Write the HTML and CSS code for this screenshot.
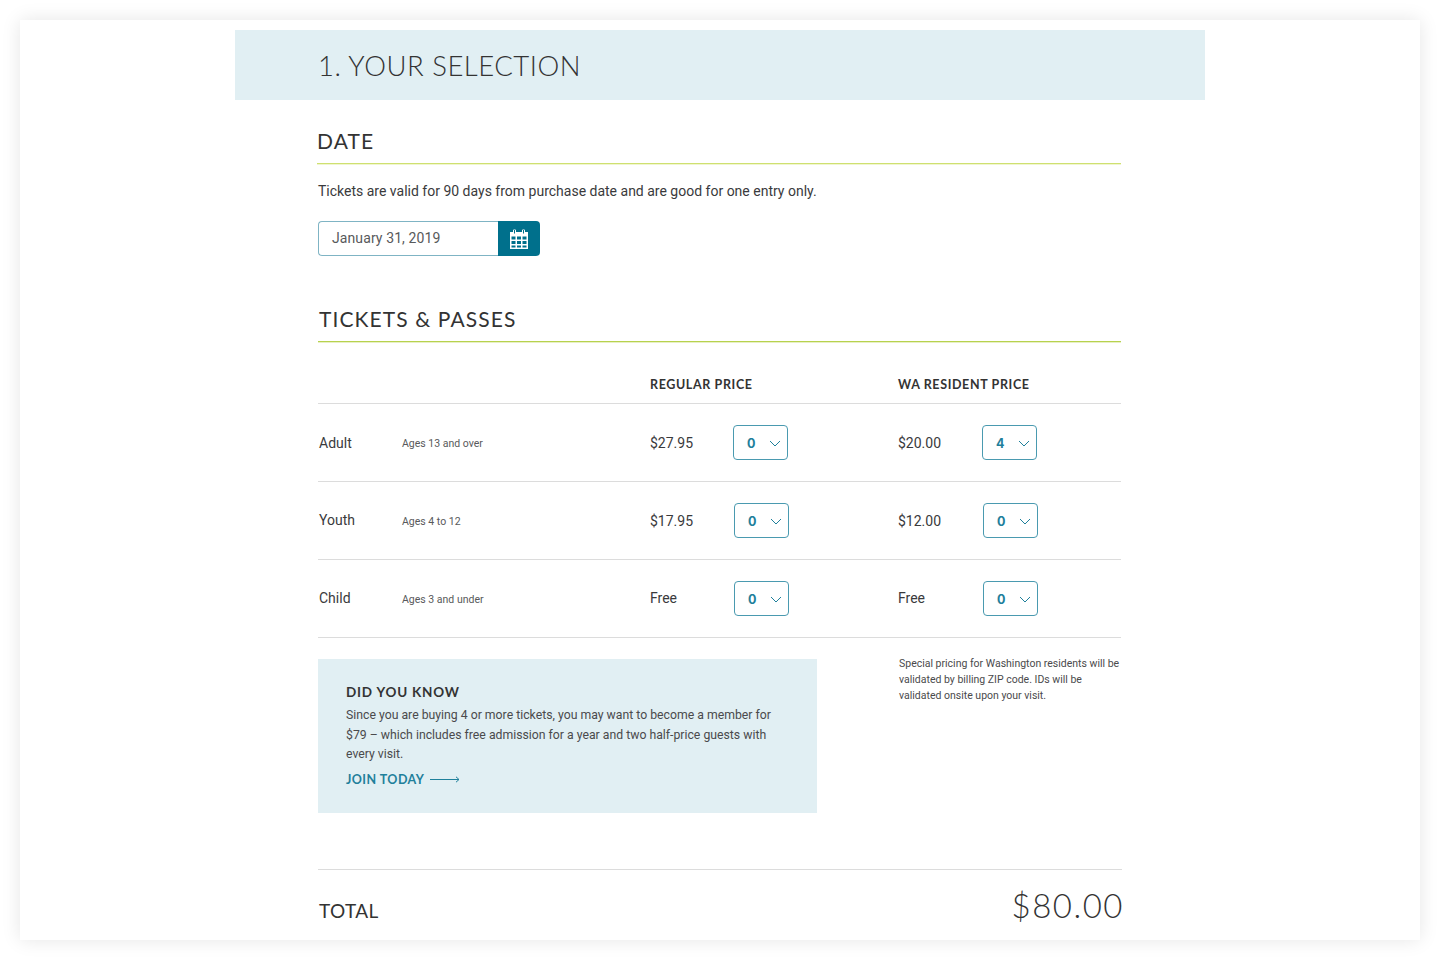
FILE: index.html
```html
<!DOCTYPE html>
<html lang="en">
<head>
<meta charset="utf-8">
<title>Your Selection</title>
<link rel="stylesheet" href="styles.css">
</head>
<body>
<main class="frame">
  <header class="banner"><h1>1. YOUR SELECTION</h1></header>
  <div class="content">
    <section class="date">
      <h2 class="section-title title-date">DATE</h2>
      <p class="lead">Tickets are valid for 90 days from purchase date and are good for one entry only.</p>
      <div class="datepicker">
        <div class="date-value">January 31, 2019</div>
        <div class="date-btn">
          <svg width="20" height="20" viewBox="0 0 20 20" aria-hidden="true">
            <path fill="#fff" d="M1 3h3v-1.5a1 1 0 0 1 1-1h1a1 1 0 0 1 1 1V3h6V1.500a1 1 0 0 1 1-1h1a1 1 0 0 1 1 1V3h3v17H1z"/>
            <path fill="#00708c" d="M5 1h1v3.500H5zM14 1h1v3.500h-1zM2.500 7.500h4v3h-4zM8 7.500h4v3H8zM13.500 7.500h4v3h-4zM2.500 12h4v3h-4zM8 12h4v3H8zM13.500 12h4v3h-4zM2.500 16.500h4v2h-4zM8 16.500h4v2H8zM13.500 16.500h4v2h-4z"/>
          </svg>
        </div>
      </div>
    </section>

    <section class="tickets">
      <h2 class="section-title title-tickets">TICKETS &amp; PASSES</h2>
      <div class="row row-head">
        <span></span><span></span>
        <span class="col-head">REGULAR PRICE</span><span></span>
        <span class="col-head">WA RESIDENT PRICE</span><span></span>
      </div>
      <div class="row row-first">
        <span class="name">Adult</span><span class="ages">Ages 13 and over</span>
        <span class="price">$27.95</span><div class="select"><b>0</b><svg class="chev" width="12" height="7" viewBox="0 0 12 7"><path d="M1 1l5 5 5-5"/></svg></div>
        <span class="price">$20.00</span><div class="select"><b>4</b><svg class="chev" width="12" height="7" viewBox="0 0 12 7"><path d="M1 1l5 5 5-5"/></svg></div>
      </div>
      <div class="row">
        <span class="name">Youth</span><span class="ages">Ages 4 to 12</span>
        <span class="price">$17.95</span><div class="select"><b>0</b><svg class="chev" width="12" height="7" viewBox="0 0 12 7"><path d="M1 1l5 5 5-5"/></svg></div>
        <span class="price">$12.00</span><div class="select"><b>0</b><svg class="chev" width="12" height="7" viewBox="0 0 12 7"><path d="M1 1l5 5 5-5"/></svg></div>
      </div>
      <div class="row">
        <span class="name">Child</span><span class="ages">Ages 3 and under</span>
        <span class="price price-free">Free</span><div class="select"><b>0</b><svg class="chev" width="12" height="7" viewBox="0 0 12 7"><path d="M1 1l5 5 5-5"/></svg></div>
        <span class="price price-free">Free</span><div class="select"><b>0</b><svg class="chev" width="12" height="7" viewBox="0 0 12 7"><path d="M1 1l5 5 5-5"/></svg></div>
      </div>
    </section>

    <section class="info">
      <aside class="callout">
        <h3>DID YOU KNOW</h3>
        <p>Since you are buying 4 or more tickets, you may want to become a member for $79 – which includes free admission for a year and two half-price guests with every visit.</p>
        <a class="join" href="#">JOIN TODAY
          <svg width="30" height="7" viewBox="0 0 30 7"><path d="M0 3.500h29M26 .8l3 2.700-3 2.700"/></svg>
        </a>
      </aside>
      <div class="note-wrap"><p class="note">Special pricing for Washington residents will be validated by billing ZIP code. IDs will be validated onsite upon your visit.</p></div>
    </section>

    <footer class="total">
      <span class="total-label">TOTAL</span>
      <span class="total-value">$80.00</span>
    </footer>
  </div>
</main>
</body>
</html>
```
FILE: styles.css
```css
* { box-sizing: border-box; }
html, body { margin: 0; padding: 0; background: #fff; }
body { height: 960px; padding: 20px; overflow: hidden; font-family: Roboto, "Liberation Sans", sans-serif; color: #3a3a3c; }
h1, h2, h3, p { margin: 0; font-weight: 400; }

.frame { width: 1400px; height: 920px; padding-top: 10px; overflow: hidden; background: #fff; box-shadow: 0 0 18px rgba(0, 0, 0, .1); }

.banner { height: 70px; margin: 0 215px; padding: 2px 0 0 83px; display: flex; align-items: center; background: #e1eff3; }
.banner h1 { font: 300 27.500px/36px Lato, sans-serif; letter-spacing: .5px; color: #333; }

.content { padding: 0 299px 0 298px; }

.section-title { height: 64px; font: 400 21px/26px Lato, sans-serif; letter-spacing: 1.1px; color: #333; }
.title-date { border-bottom: 1px solid #cfe070; box-shadow: 0 1px 0 #f0f6cf; padding-top: 28px; margin-left: -1px; }
.title-tickets { border-bottom: 1px solid #b7d24e; box-shadow: 0 1px 0 #e8f0c4; padding-left: 1px; height: 86px; padding-top: 50px; }

.lead { margin-top: 17px; font-size: 14px; line-height: 20px; color: #3a3a3c; }

.datepicker { display: flex; width: 222px; height: 35px; margin-top: 20px; }
.date-value { flex: 1; padding: 0 0 2px 13px; display: flex; align-items: center; font-size: 14px; letter-spacing: .1px; color: #58595b; border: 1px solid #7fb4c4; border-right: 0; border-radius: 4px 0 0 4px; }
.date-btn { width: 42px; display: flex; align-items: center; justify-content: center; background: #00708c; border-radius: 0 4px 4px 0; }

.row { display: grid; grid-template-columns: 83px 249px 84px 164px 85px 135px; align-items: center; height: 78px; border-bottom: 1px solid #dcdcdc; }
.row-head { height: 62px; padding-top: 25px; }
.col-head { font: 700 12.500px/16px Lato, sans-serif; letter-spacing: .62px; color: #333; white-space: nowrap; }

.name { padding: 0 0 2px 1px; font-size: 14px; color: #3a3a3c; }
.ages { padding: 2px 0 0 1px; font-size: 10.500px; color: #58595b; }
.price { font-size: 14px; color: #3a3a3c; }
.price-free { padding-bottom: 2px; }
.row-first .name { padding-bottom: 0; }
.row-first .select { margin-left: -1px; }
.select { width: 55px; height: 35px; display: flex; align-items: center; justify-content: space-between; padding: 0 6px 0 13px; border: 1px solid #4a9ab0; border-radius: 4px; }
.select b { padding-top: 2px; font: 700 12.500px/16px Inter, Lato, sans-serif; color: #1f809b; }
.chev { margin-top: 2px; }
.chev path { fill: none; stroke: #1f809b; stroke-width: 1; }

.info { display: flex; justify-content: space-between; margin-top: 21px; }
.callout { width: 499px; height: 154px; padding: 25px 28px 0; background: #e1eff3; }
.callout h3 { font: 700 13.500px/16px Lato, sans-serif; letter-spacing: .8px; color: #333; }
.callout p { margin-top: 6px; font-size: 12.250px; line-height: 19.500px; color: #4a4a4c; }
.join { display: flex; align-items: center; gap: 6px; margin-top: 7px; font: 700 12.500px/16px Lato, sans-serif; letter-spacing: .45px; color: #1f809b; text-decoration: none; }
.join svg path { fill: none; stroke: #1f809b; stroke-width: 1; }
.note-wrap { width: 222px; margin-top: -3px; }
.note { font-size: 10.500px; line-height: 16px; color: #4a4a4c; }

.total { display: flex; justify-content: space-between; align-items: flex-start; height: 70px; margin-top: 56px; padding: 0 0 0 1px; border-top: 1px solid #dcdcdc; width: 804px; }
.total-label { margin-top: 29px; font: 400 19px/24px Lato, sans-serif; letter-spacing: .4px; color: #333; }
.total-value { margin: 15px -2px 0 0; font: 300 33px/40px Lato, sans-serif; letter-spacing: 1.5px; color: #333; }
```
